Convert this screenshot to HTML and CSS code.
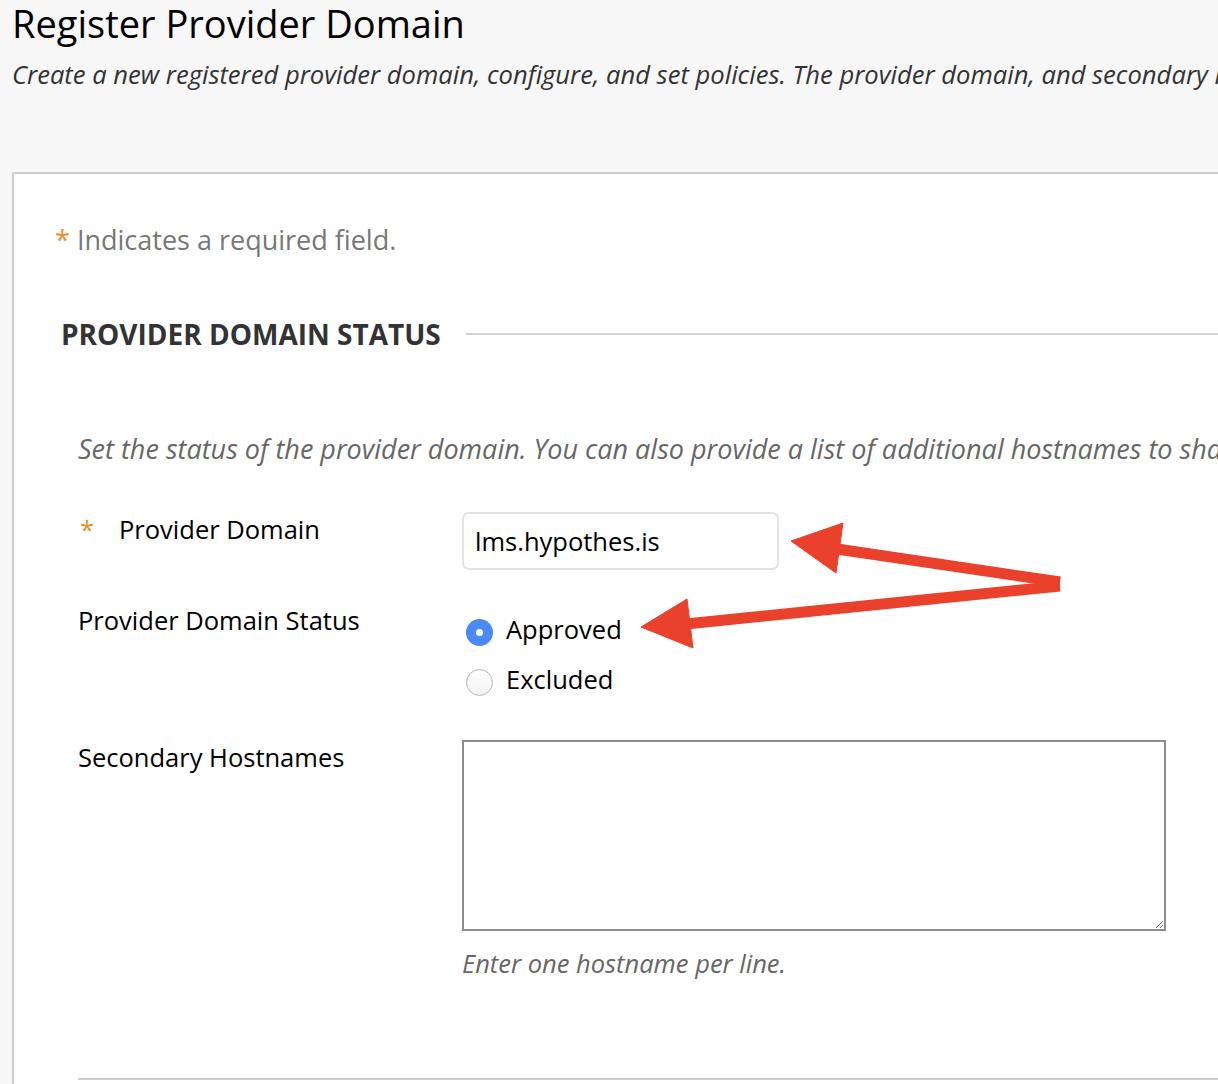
FILE: index.html
```html
<!DOCTYPE html>
<html lang="en">
<head>
  <meta charset="UTF-8" />
  <meta name="viewport" content="width=device-width, initial-scale=1.0"/>
  <title>Register Provider Domain</title>
  <link rel="stylesheet" href="styles.css">
</head>
<body>

  <div class="page-header">
    <h1>Register Provider Domain</h1>
    <p class="page-desc">Create a new registered provider domain, configure, and set policies. The provider domain, and secondary hostnames are used to match tools.</p>
  </div>

  <div class="panel">
    <p class="req-note"><span class="req">*</span> Indicates a required field.</p>

    <div class="step">
      <div class="step-title">
        <h2>Provider Domain Status</h2>
        <span class="step-rule"></span>
      </div>

      <div class="step-body">
        <p class="step-desc">Set the status of the provider domain. You can also provide a list of additional hostnames to share the same settings.</p>

        <div class="field-row">
          <label class="field-label" for="domain"><span class="req req-mark">*</span>Provider Domain</label>
          <div class="field">
            <input type="text" id="domain" class="text-input" value="lms.hypothes.is" />
          </div>
        </div>

        <div class="field-row">
          <span class="field-label">Provider Domain Status</span>
          <div class="field radio-list">
            <label class="radio-item"><input type="radio" name="status" checked /> Approved</label>
            <label class="radio-item"><input type="radio" name="status" /> Excluded</label>
          </div>
        </div>

        <div class="field-row field-row-wide">
          <label class="field-label" for="hosts">Secondary Hostnames</label>
          <div class="field">
            <textarea id="hosts" class="text-area"></textarea>
            <p class="hint">Enter one hostname per line.</p>
          </div>
        </div>

        <div class="step-end"></div>
      </div>
    </div>
  </div>

  <!-- annotation arrows -->
  <svg class="arrows" viewBox="0 0 1218 1084" width="1218" height="1084">
    <g fill="#e9412b" stroke="#e9412b">
      <line x1="837" y1="549" x2="1060" y2="582" stroke-width="11" />
      <polygon points="791,541 843,523 836,573" stroke-width="1" />
      <line x1="686" y1="624" x2="1060" y2="586" stroke-width="11" />
      <polygon points="641,627 687,599 693,648" stroke-width="1" />
    </g>
  </svg>

</body>
</html>
```

FILE: styles.css
```css
* {
  box-sizing: border-box;
}

body {
  font-family: 'Open Sans', 'Noto Sans', sans-serif;
  background-color: #f7f7f7;
  color: #000;
  margin: 0;
  padding: 0;
  width: 1218px;
  height: 1084px;
  overflow: hidden;
  position: relative;
}

.page-header {
  padding: 0 0 0 12px;
  height: 172px;
}

.page-header h1 {
  font-size: 38px;
  font-weight: 400;
  line-height: 46px;
  margin: 0;
  color: #000;
}

.page-desc {
  font-size: 25.6px;
  font-style: italic;
  line-height: 34px;
  margin: 12px 0 0;
  color: #333;
  white-space: nowrap;
}

.panel {
  margin-left: 12px;
  width: 1400px;
  height: 1000px;
  background-color: #fff;
  border-top: 2px solid #cdcdcd;
  border-left: 2px solid #cdcdcd;
  padding: 48px 0 0 41px;
}

.req {
  color: #f0892c;
}

.req-note {
  font-size: 27px;
  line-height: 36px;
  color: #777;
  margin: 0;
}

.step {
  margin-top: 58px;
}

.step-title {
  display: flex;
  align-items: center;
  gap: 25px;
  padding-left: 6px;
}

.step-title h2 {
  font-size: 28px;
  font-weight: 700;
  text-transform: uppercase;
  line-height: 36px;
  color: #333;
  margin: 0;
  white-space: nowrap;
}

.step-rule {
  flex: 1;
  border-top: 2px solid #d4d4d4;
}

.step-body {
  padding-left: 23px;
}

.step-desc {
  font-size: 27px;
  font-style: italic;
  line-height: 36px;
  color: #666;
  margin: 79px 0 0;
  white-space: nowrap;
}

.field-row {
  display: grid;
  grid-template-columns: 384px 1fr;
  margin-top: 45px;
}

.field-row + .field-row {
  margin-top: 33px;
}

.field-row + .field-row-wide {
  margin-top: 36px;
}

.field-label {
  font-size: 25.5px;
  line-height: 34px;
}

.req-mark {
  display: inline-block;
  width: 41px;
  padding-left: 2px;
}

.text-input {
  width: 317px;
  height: 58px;
  border: 2px solid #e3e3e3;
  border-radius: 7px;
  padding: 0 11px;
  font-family: 'Open Sans', sans-serif;
  font-size: 25.5px;
  color: #000;
  outline: none;
}

.radio-list {
  display: flex;
  flex-direction: column;
  margin-top: 1px;
}

.radio-item {
  display: flex;
  align-items: center;
  gap: 13px;
  font-size: 25.5px;
  line-height: 50px;
  padding-left: 4px;
}

.radio-item input {
  appearance: none;
  -webkit-appearance: none;
  width: 27px;
  height: 27px;
  margin: 0;
  border-radius: 50%;
  border: 1px solid #b5b5b5;
  background: linear-gradient(#fff, #f2f2f2);
  position: relative;
  top: 3px;
}

.radio-item input:checked {
  border: none;
  background: #4b8af2;
}

.radio-item input:checked::after {
  content: "";
  position: absolute;
  left: 10px;
  top: 10px;
  width: 7px;
  height: 7px;
  border-radius: 50%;
  background: #fff;
}

.text-area {
  display: block;
  width: 704px;
  height: 191px;
  border: 2px solid #8c8c8c;
  border-radius: 0;
  font-family: 'Open Sans', sans-serif;
  font-size: 25px;
  margin: 0;
}

.hint {
  font-size: 25.5px;
  font-style: italic;
  line-height: 34px;
  color: #666;
  margin: 15px 0 0;
}

.step-end {
  margin-top: 98px;
  border-top: 2px solid #cdcdcd;
}

.arrows {
  position: absolute;
  top: 0;
  left: 0;
  pointer-events: none;
}
```
